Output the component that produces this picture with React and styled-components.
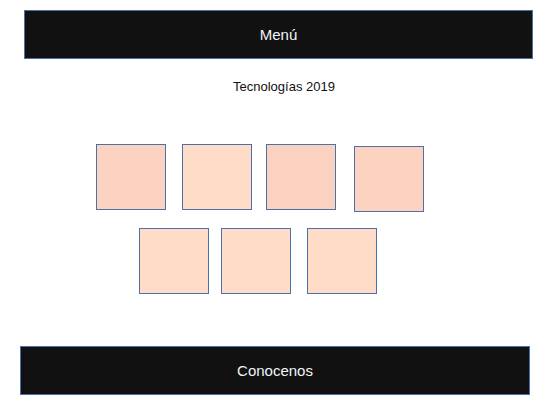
import React from 'react';
import styled, { createGlobalStyle } from 'styled-components';

const GlobalStyle = createGlobalStyle`
  body {
    margin: 0;
    background: #ffffff;
    font-family: 'Liberation Sans', Arial, sans-serif;
  }
`;

const Page = styled.div`
  display: flex;
  flex-direction: column;
  width: 550px;
`;

const Bar = styled.div`
  box-sizing: border-box;
  display: flex;
  align-items: center;
  justify-content: center;
  height: 49px;
  width: ${props => props.$width}px;
  margin-left: ${props => props.$left}px;
  margin-top: ${props => props.$top}px;
  background-color: #111111;
  border: 1px solid #4a70aa;
  color: #f2f4f8;
  font-size: 15px;
`;

const Title = styled.div`
  margin-top: 20px;
  padding-left: 18px;
  text-align: center;
  font-size: 13px;
  line-height: 15px;
  color: #111111;
`;

const TileRow = styled.div`
  display: flex;
  align-items: flex-start;
  padding-left: ${props => props.$indent}px;
  margin-top: ${props => props.$top}px;
`;

const Tile = styled.div`
  box-sizing: border-box;
  width: 70px;
  height: 66px;
  margin-left: ${props => props.$gap || 0}px;
  margin-top: ${props => props.$drop || 0}px;
  background-color: ${props => props.$fill};
  border: 1px solid #4c70a8;
`;

const DEEP = '#fcd3c1';
const LIGHT = '#fedcc7';

const topRow = [
  { fill: DEEP, gap: 0 },
  { fill: LIGHT, gap: 16 },
  { fill: '#fbd2c0', gap: 14 },
  { fill: DEEP, gap: 18, drop: 2 },
];

const bottomRow = [
  { fill: LIGHT, gap: 0 },
  { fill: LIGHT, gap: 12 },
  { fill: LIGHT, gap: 16 },
];

export default function App() {
  return (
    <>
      <GlobalStyle />
      <Page>
        <Bar $width={509} $left={24} $top={10}>Menú</Bar>
        <Title>Tecnologías 2019</Title>
        <TileRow $indent={96} $top={50}>
          {topRow.map((t, i) => (
            <Tile key={i} $fill={t.fill} $gap={t.gap} $drop={t.drop} />
          ))}
        </TileRow>
        <TileRow $indent={139} $top={16}>
          {bottomRow.map((t, i) => (
            <Tile key={i} $fill={t.fill} $gap={t.gap} />
          ))}
        </TileRow>
        <Bar $width={510} $left={20} $top={52}>Conocenos</Bar>
      </Page>
    </>
  );
}
